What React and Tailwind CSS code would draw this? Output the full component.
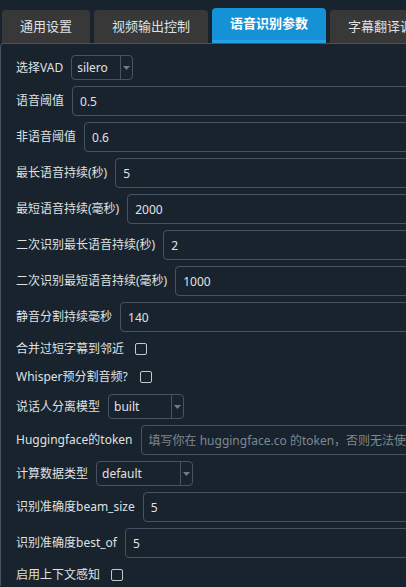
import { useState } from "react";

const tabs = ["通用设置", "视频输出控制", "语音识别参数", "字幕翻译调整"];

const TextRow = ({ label, value, placeholder }) => (
  <div className="flex h-[30px] items-center gap-2">
    <span className="shrink-0 whitespace-nowrap">{label}</span>
    <input
      className="h-[30px] flex-1 rounded-[4px] border border-[#455364] bg-[#19232d] px-[7px] text-[#e0e1e3] outline-none placeholder:text-[#7d8893]"
      defaultValue={value}
      placeholder={placeholder}
    />
  </div>
);

const ComboRow = ({ label, value, width }) => (
  <div className="flex h-[25px] items-center gap-2">
    <span className="shrink-0 whitespace-nowrap">{label}</span>
    <div className={`flex h-[25px] items-stretch rounded-[4px] border border-[#455364] ${width}`}>
      <span className="flex flex-1 items-center pl-[5px] text-[#e0e1e3]">{value}</span>
      <span className="flex w-[12px] items-center justify-center border-l border-[#455364]">
        <svg width="7" height="4" viewBox="0 0 7 4">
          <path d="M0 0h7L3.5 4z" fill="#6d7a87" />
        </svg>
      </span>
    </div>
  </div>
);

const CheckRow = ({ label, gap }) => {
  const [on, setOn] = useState(false);
  return (
    <div className={`flex h-[22px] items-center ${gap}`}>
      <span className="shrink-0 whitespace-nowrap">{label}</span>
      <button
        onClick={() => setOn(!on)}
        className="h-[12px] w-[12px] rounded-[2px] border border-[#c5c9cd] bg-transparent"
      />
    </div>
  );
};

export default function App() {
  return (
    <div
      className="h-[587px] w-[406px] overflow-hidden bg-[#19232d] text-[12px] text-[#dfe1e2]"
      style={{ fontFamily: '"Noto Sans", "Noto Sans CJK SC", sans-serif' }}
    >
      {/* tab bar */}
      <div className="flex h-[43px] w-[600px] items-end gap-1 pl-[2px]">
        {tabs.map((t, i) =>
          i === 2 ? (
            <div
              key={t}
              className="flex h-[35px] w-[114px] shrink-0 flex-col rounded-t-[4px] bg-[#1591d6] text-[13px] font-bold text-white"
            >
              <span className="flex flex-1 items-center justify-center">{t}</span>
              <span className="h-[3px] bg-[#27a1e6]" />
            </div>
          ) : (
            <div
              key={t}
              className={`flex h-[33px] shrink-0 items-center justify-center rounded-t-[4px] bg-[#383838] text-[13px] text-[#dfe1e2] ${
                i === 0 ? "w-[88px]" : "w-[114px]"
              }`}
            >
              {t}
            </div>
          )
        )}
      </div>

      {/* panel */}
      <div className="flex w-[700px] flex-col gap-[6px] rounded-tl-[4px] border-l border-t border-[#455364] pl-[15px] pt-[11px]">
        <ComboRow label="选择VAD" value="silero" width="w-[62px]" />
        <TextRow label="语音阈值" value="0.5" />
        <TextRow label="非语音阈值" value="0.6" />
        <TextRow label="最长语音持续(秒)" value="5" />
        <TextRow label="最短语音持续(毫秒)" value="2000" />
        <TextRow label="二次识别最长语音持续(秒)" value="2" />
        <TextRow label="二次识别最短语音持续(毫秒)" value="1000" />
        <TextRow label="静音分割持续毫秒" value="140" />
        <CheckRow label="合并过短字幕到邻近" gap="gap-[11px]" />
        <CheckRow label="Whisper预分割音频?" gap="gap-[12px]" />
        <ComboRow label="说话人分离模型" value="built" width="w-[76px]" />
        <TextRow
          label="Huggingface的token"
          placeholder="填写你在 huggingface.co 的token，否则无法使用说话人分离"
        />
        <ComboRow label="计算数据类型" value="default" width="w-[97px]" />
        <TextRow label="识别准确度beam_size" value="5" />
        <TextRow label="识别准确度best_of" value="5" />
        <CheckRow label="启用上下文感知" gap="gap-[11px]" />
      </div>
    </div>
  );
}
